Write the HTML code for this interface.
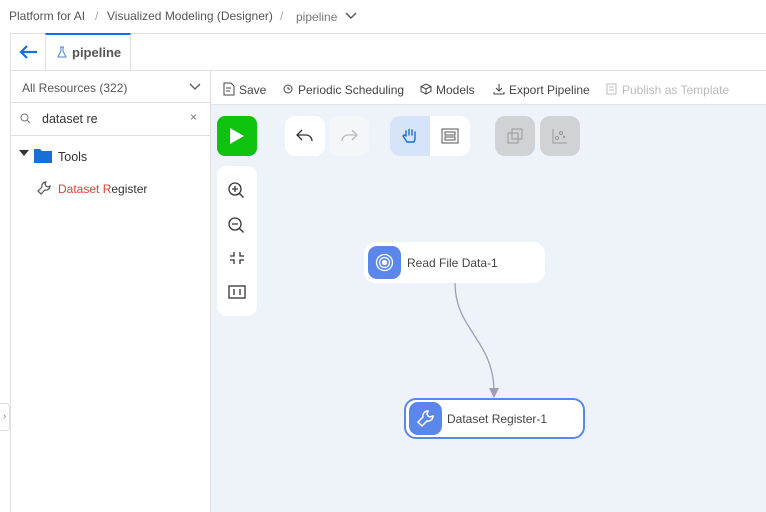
<!DOCTYPE html>
<html><head><style>
*{box-sizing:border-box;margin:0;padding:0}
body{width:766px;height:512px;overflow:hidden;background:#fff;font-family:"Liberation Sans",sans-serif;font-size:12px;color:#333;position:relative}
.a{position:absolute;white-space:nowrap}
.btn{position:absolute;background:#fff;border-radius:10px}
</style></head><body>
<div class="a" style="left:9px;top:9px;font-size:12px;color:#555">Platform for AI</div>
<div class="a" style="left:95px;top:9px;font-size:12px;color:#aaa">/</div>
<div class="a" style="left:107px;top:9px;font-size:12px;color:#555">Visualized Modeling (Designer)</div>
<div class="a" style="left:280px;top:9px;font-size:12px;color:#aaa">/</div>
<div class="a" style="left:296px;top:10px;font-size:12px;color:#777">pipeline</div>
<svg class="a" style="left:345px;top:12px" width="12" height="8"><path d="M1 1l5 5 5-5" stroke="#555" fill="none" stroke-width="1.4"/></svg>
<div class="a" style="left:10px;top:33px;width:756px;height:1px;background:#e0e0e0"></div>
<div class="a" style="left:10px;top:33px;width:1px;height:479px;background:#e0e0e0"></div>
<div class="a" style="left:45px;top:33px;width:86px;height:37px;border-right:1px solid #e0e0e0;border-left:1px solid #e0e0e0;border-top:2px solid #1a6fd6"></div>
<svg class="a" style="left:19px;top:44px" width="20" height="16"><path d="M2 8h16M8 2L2 8l6 6" stroke="#1a6fd6" stroke-width="2.2" fill="none"/></svg>
<svg class="a" style="left:57px;top:46px" width="10" height="12"><path d="M3 1h4M4 1v4L1 11h8L6 5V1" stroke="#4a86d9" fill="none"/></svg>
<div class="a" style="left:72px;top:45px;font-weight:bold;font-size:13px;color:#555">pipeline</div>
<div class="a" style="left:10px;top:70px;width:756px;height:1px;background:#e0e0e0"></div>
<div class="a" style="left:210px;top:70px;width:1px;height:442px;background:#e0e0e0"></div>
<div class="a" style="left:22px;top:81px;font-size:12px;color:#555">All Resources (322)</div>
<svg class="a" style="left:189px;top:83px" width="12" height="8"><path d="M1 1l5 5 5-5" stroke="#555" fill="none" stroke-width="1.3"/></svg>
<div class="a" style="left:10px;top:102px;width:200px;height:1px;background:#e0e0e0"></div>
<svg class="a" style="left:20px;top:113px" width="11" height="11"><circle cx="4.5" cy="4.5" r="3.5" stroke="#777" fill="none"/><path d="M7 7l3 3" stroke="#777"/></svg>
<div class="a" style="left:42px;top:112px;font-size:12.5px;color:#333">dataset re</div>
<div class="a" style="left:190px;top:110px;font-size:12px;color:#777">×</div>
<div class="a" style="left:10px;top:135px;width:200px;height:1px;background:#e0e0e0"></div>
<svg class="a" style="left:19px;top:150px" width="10" height="6"><path d="M0 0h10L5 6z" fill="#333"/></svg>
<svg class="a" style="left:34px;top:148px" width="18" height="15"><path d="M0 1h6l2 2h10v12H0z" fill="#1a6fd6"/></svg>
<div class="a" style="left:58px;top:150px;font-size:12.5px;color:#333">Tools</div>
<svg class="a" style="left:36px;top:180px" width="16" height="16"><path d="M10 2a4 4 0 0 0-4 5L2 11l3 3 4-4a4 4 0 0 0 5-4l-2 1-2-1-1-2z" stroke="#555" fill="none" stroke-width="1.2"/></svg>
<div class="a" style="left:58px;top:182px;font-size:12px;color:#333"><span style="color:#e0433a">Dataset R</span>egister</div>
<div class="a" style="left:0;top:403px;width:10px;height:28px;border:1px solid #ddd;border-left:none;border-radius:0 4px 4px 0;background:#fff;font-size:10px;color:#888;line-height:26px;text-align:center">›</div>
<div class="a" style="left:211px;top:71px;width:555px;height:34px;border-bottom:1px solid #dfe3ea"></div>
<svg class="a" style="left:223px;top:82px" width="12" height="14" fill="none" stroke="#444"><path d="M1 1h7l3 3v9H1z M3 6h5M3 9h4"/></svg>
<div class="a" style="left:239px;top:83px;font-size:12px;color:#444">Save</div>
<svg class="a" style="left:283px;top:84px" width="10" height="10" fill="none" stroke="#444"><circle cx="5" cy="5" r="4"/><path d="M5 3v2h2"/></svg>
<div class="a" style="left:298px;top:83px;font-size:12px;color:#444">Periodic Scheduling</div>
<svg class="a" style="left:420px;top:83px" width="12" height="12" fill="none" stroke="#444"><path d="M6 1l5 2.5v5L6 11 1 8.5v-5zM1 3.5L6 6l5-2.5M6 6v5"/></svg>
<div class="a" style="left:436px;top:83px;font-size:12px;color:#444">Models</div>
<svg class="a" style="left:493px;top:83px" width="12" height="12" fill="none" stroke="#444"><path d="M6 1v7M3 5l3 3 3-3M1 9v2h10V9"/></svg>
<div class="a" style="left:509px;top:83px;font-size:12px;color:#444">Export Pipeline</div>
<svg class="a" style="left:606px;top:83px" width="12" height="12" fill="none" stroke="#bbb"><rect x="1" y="1" width="9" height="10"/><path d="M3 4h5M3 7h5"/></svg>
<div class="a" style="left:622px;top:83px;font-size:12px;color:#bbb">Publish as Template</div>
<div class="a" style="left:211px;top:105px;width:555px;height:407px;background:#eef2f9"></div>
<div class="a" style="left:217px;top:116px;width:40px;height:40px;background:#0ec20e;border-radius:8px"></div>
<svg class="a" style="left:230px;top:128px" width="14" height="16"><path d="M0 0l14 8L0 16z" fill="#fff"/></svg>
<div class="btn" style="left:285px;top:116px;width:40px;height:40px"></div>
<svg class="a" style="left:296px;top:129px" width="18" height="14"><path d="M6 1L1 6l5 5M1 6h9a6 6 0 0 1 6 6" stroke="#333" fill="none" stroke-width="1.3"/></svg>
<div class="btn" style="left:329px;top:116px;width:40px;height:40px;background:#f4f6fa"></div>
<svg class="a" style="left:340px;top:129px" width="18" height="14"><path d="M12 1l5 5-5 5M17 6H8a6 6 0 0 0-6 6" stroke="#bbb" fill="none" stroke-width="1.3"/></svg>
<div class="btn" style="left:390px;top:116px;width:80px;height:40px"></div>
<div class="a" style="left:390px;top:116px;width:40px;height:40px;background:#d6e4fa;border-radius:10px 0 0 10px"></div>
<svg class="a" style="left:401px;top:127px" width="18" height="18" fill="none" stroke="#1a6fd6" stroke-width="1.4" stroke-linecap="round"><path d="M5 9V4M8 8V2.5M11 8V3M14 9V5M5 9L3 8l-1 1 4 6h7l1-3V9"/></svg>
<svg class="a" style="left:441px;top:128px" width="18" height="16"><rect x="1" y="1" width="16" height="14" stroke="#555" fill="none"/><rect x="4" y="4" width="10" height="3" stroke="#555" fill="none"/><rect x="4" y="9" width="10" height="3" stroke="#555" fill="none"/></svg>
<div class="btn" style="left:495px;top:116px;width:40px;height:40px;background:#d0d2d6"></div>
<div class="btn" style="left:540px;top:116px;width:40px;height:40px;background:#d0d2d6"></div>
<svg class="a" style="left:507px;top:128px" width="16" height="16"><rect x="1" y="5" width="10" height="10" stroke="#999" fill="none"/><rect x="5" y="1" width="10" height="10" stroke="#999" fill="none"/></svg>
<svg class="a" style="left:552px;top:128px" width="16" height="16"><path d="M1 1v14h14" stroke="#999" fill="none"/><circle cx="5" cy="10" r="1.5" stroke="#999" fill="none"/><circle cx="9" cy="5" r="1.5" stroke="#999" fill="none"/><circle cx="12" cy="9" r="1.2" fill="#999"/></svg>
<div class="btn" style="left:217px;top:166px;width:40px;height:150px"></div>
<svg class="a" style="left:227px;top:180px" width="20" height="126" fill="none" stroke="#333" stroke-width="1.3">
<circle cx="8" cy="9" r="6"/><path d="M12.5 13.5l4 4M5 9h6M8 6v6"/>
<circle cx="8" cy="44" r="6"/><path d="M12.5 48.5l4 4M5 44h6"/>
<path d="M7 72v4H3M13 72v4h4M7 84v-4H3M13 84v-4h4"/>
<rect x="2" y="106" width="16" height="12"/><path d="M7 109v6M13 109v6"/></svg>
<svg class="a" style="left:0;top:0" width="766" height="512"><path d="M455 283C455 330 494 340 494 392" stroke="#9aa0b5" stroke-width="1.3" fill="none"/><path d="M489 388h10l-5 10z" fill="#9aa0b5"/></svg>
<div class="btn" style="left:364px;top:242px;width:181px;height:41px;border-radius:12px"></div>
<div class="a" style="left:368px;top:246px;width:33px;height:33px;background:#5b87ea;border-radius:9px"></div>
<svg class="a" style="left:374px;top:252px" width="21" height="21" fill="none" stroke="#fff" stroke-width="1.3"><circle cx="10.5" cy="10.5" r="8"/><circle cx="10.5" cy="10.5" r="5"/><circle cx="10.5" cy="10.5" r="2" fill="#fff"/></svg>
<div class="a" style="left:407px;top:256px;font-size:12px;color:#444">Read File Data-1</div>
<div class="btn" style="left:404px;top:398px;width:181px;height:41px;border-radius:12px;border:2px solid #5b87ea"></div>
<div class="a" style="left:409px;top:402px;width:33px;height:33px;background:#5b87ea;border-radius:9px"></div>
<svg class="a" style="left:416px;top:409px" width="19" height="19"><path d="M12 2a5 5 0 0 0-5 6L2 13l4 4 5-5a5 5 0 0 0 6-5l-3 1-2-1-1-2z" stroke="#fff" fill="none" stroke-width="1.5"/></svg>
<div class="a" style="left:447px;top:412px;font-size:12px;color:#444">Dataset Register-1</div>
</body></html>
